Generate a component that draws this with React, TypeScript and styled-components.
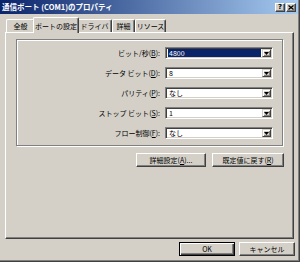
import React from 'react';
import styled, { createGlobalStyle, css } from 'styled-components';

const face = '#d4d0c8';
const shadow = '#808080';
const dark = '#404040';

const GlobalStyle = createGlobalStyle`
  html, body {
    margin: 0;
    padding: 0;
    background: ${face};
  }
  body {
    font-family: "Noto Sans CJK JP", "DejaVu Sans", sans-serif;
    font-size: 7px;
    color: #000;
  }
`;

const Window = styled.div`
  width: 300px;
  height: 262px;
  box-sizing: border-box;
  background: ${face};
  border-right: 1px solid ${dark};
  border-bottom: 1px solid ${dark};
  box-shadow: inset -1px -1px 0 ${shadow};
  display: flex;
  flex-direction: column;
  overflow: hidden;
`;

const TitleBar = styled.div`
  height: 14px;
  margin-right: 1px;
  display: flex;
  align-items: center;
  padding-left: 2px;
  background: linear-gradient(to right, #0a246a, #a6caf0);
  color: #fff;
  font-weight: bold;
  font-size: 7.5px;
  white-space: nowrap;
`;

const TitleText = styled.span`
  flex: 1;
  line-height: 14px;
`;

const CaptionButtons = styled.div`
  display: flex;
  gap: 1px;
  padding-right: 2px;
`;

const CaptionButton = styled.div`
  width: 10px;
  height: 9px;
  box-sizing: border-box;
  background: ${face};
  border: 1px solid;
  border-color: #fff ${dark} ${dark} #fff;
  box-shadow: inset -1px -1px 0 ${shadow};
  display: flex;
  align-items: center;
  justify-content: center;
  color: #000;
  font-family: "DejaVu Sans", sans-serif;
  font-size: 7px;
  font-weight: bold;
  line-height: 7px;
`;

const Body = styled.div`
  flex: 1;
  display: flex;
  flex-direction: column;
  padding: 3px 5px 0 5px;
`;

const TabStrip = styled.div`
  height: 15px;
  display: flex;
  align-items: flex-end;
  padding-left: 1px;
`;

const Tab = styled.div<{ $w: number; $active?: boolean }>`
  width: ${p => p.$w}px;
  height: 13px;
  box-sizing: border-box;
  background: ${face};
  border-top: 1px solid #fff;
  border-left: 1px solid #fff;
  border-right: 1px solid ${dark};
  border-radius: 2px 2px 0 0;
  box-shadow: inset -1px 0 0 ${shadow};
  display: flex;
  align-items: center;
  justify-content: center;
  white-space: nowrap;
  line-height: 10px;

  ${p =>
    p.$active &&
    css`
      height: 16px;
      margin: 0 -2px -1px;
      position: relative;
      z-index: 1;
    `}
`;

const Panel = styled.div`
  width: 289px;
  height: 207px;
  box-sizing: border-box;
  border: 1px solid;
  border-color: #fff ${dark} ${dark} #fff;
  box-shadow: inset -1px -1px 0 ${shadow};
  padding: 6px 10px 0 10px;
  display: flex;
  flex-direction: column;
`;

const GroupBox = styled.div`
  height: 107px;
  box-sizing: border-box;
  border: 1px solid ${shadow};
  box-shadow: 1px 1px 0 #fff, inset 1px 1px 0 #fff;
  padding: 7px 0 0 0;
`;

const Fields = styled.div`
  display: grid;
  grid-template-columns: 143px 108px;
  grid-auto-rows: 12px;
  column-gap: 5px;
  row-gap: 8px;
  align-items: center;
`;

const Label = styled.label`
  text-align: right;
  white-space: nowrap;
  line-height: 12px;
`;

const Combo = styled.div`
  height: 12px;
  box-sizing: border-box;
  background: #fff;
  border: 1px solid;
  border-color: ${shadow} #fff #fff ${shadow};
  box-shadow: inset 1px 1px 0 ${dark}, inset -1px -1px 0 ${face};
  padding: 1px;
  display: flex;
`;

const ComboValue = styled.div<{ $selected?: boolean }>`
  flex: 1;
  margin: 0 1px;
  padding-left: 1px;
  line-height: 8px;
  white-space: nowrap;
  ${p =>
    p.$selected &&
    css`
      background: #0a246a;
      color: #fff;
    `}
`;

const DropButton = styled.div`
  width: 9px;
  box-sizing: border-box;
  background: ${face};
  border: 1px solid;
  border-color: ${face} ${dark} ${dark} ${face};
  box-shadow: inset 1px 1px 0 #fff, inset -1px -1px 0 ${shadow};
  display: flex;
  align-items: center;
  justify-content: center;
`;

const ButtonRow = styled.div<{ $gap: number; $top: number }>`
  display: flex;
  justify-content: flex-end;
  gap: ${p => p.$gap}px;
  margin-top: ${p => p.$top}px;
  margin-right: -1px;
`;

const Button = styled.button<{ $w: number; $default?: boolean }>`
  width: ${p => p.$w}px;
  height: 14px;
  box-sizing: border-box;
  padding: 0;
  margin: 0;
  font: inherit;
  color: #000;
  background: ${face};
  border: 1px solid;
  border-color: #fff ${dark} ${dark} #fff;
  box-shadow: inset -1px -1px 0 ${shadow};
  line-height: 10px;
  white-space: nowrap;

  ${p =>
    p.$default &&
    css`
      border-color: #000;
      box-shadow: inset 1px 1px 0 #fff, inset -1px -1px 0 ${dark}, inset -2px -2px 0 ${shadow};
    `}
`;

const Footer = styled(ButtonRow)``;

const Arrow = () => (
  <svg width='5' height='3' viewBox='0 0 5 3'>
    <path d='M0 0h5L2.5 3z' fill='#000' />
  </svg>
);

const fields = [
  { label: 'ビット/秒', key: 'B', value: '4800', selected: true },
  { label: 'データ ビット', key: 'D', value: '8' },
  { label: 'パリティ', key: 'P', value: 'なし' },
  { label: 'ストップ ビット', key: 'S', value: '1' },
  { label: 'フロー制御', key: 'F', value: 'なし' }
];

const tabs = [
  { name: '全般', w: 29 },
  { name: 'ポートの設定', w: 46, active: true },
  { name: 'ドライバ', w: 35 },
  { name: '詳細', w: 23 },
  { name: 'リソース', w: 31 }
];

export default function App() {
  return (
    <>
      <GlobalStyle />
      <Window>
        <TitleBar>
          <TitleText>通信ポート (COM1)のプロパティ</TitleText>
          <CaptionButtons>
            <CaptionButton>?</CaptionButton>
            <CaptionButton>
              <svg width='6' height='5' viewBox='0 0 6 5'>
                <path d='M0.5 0.5L5.5 4.5M5.5 0.5L0.5 4.5' stroke='#000' strokeWidth='1.3' />
              </svg>
            </CaptionButton>
          </CaptionButtons>
        </TitleBar>

        <Body>
          <TabStrip>
            {tabs.map(t => (
              <Tab key={t.name} $w={t.w} $active={t.active}>
                {t.name}
              </Tab>
            ))}
          </TabStrip>

          <Panel>
            <GroupBox>
              <Fields>
                {fields.map(f => (
                  <React.Fragment key={f.key}>
                    <Label>
                      {f.label}(<u>{f.key}</u>):
                    </Label>
                    <Combo>
                      <ComboValue $selected={f.selected}>{f.value}</ComboValue>
                      <DropButton>
                        <Arrow />
                      </DropButton>
                    </Combo>
                  </React.Fragment>
                ))}
              </Fields>
            </GroupBox>

            <ButtonRow $gap={6} $top={7}>
              <Button $w={70}>
                詳細設定(<u>A</u>)...
              </Button>
              <Button $w={72}>
                既定値に戻す(<u>R</u>)
              </Button>
            </ButtonRow>
          </Panel>

          <Footer $gap={4} $top={3}>
            <Button $w={56} $default>
              OK
            </Button>
            <Button $w={56}>キャンセル</Button>
          </Footer>
        </Body>
      </Window>
    </>
  );
}
